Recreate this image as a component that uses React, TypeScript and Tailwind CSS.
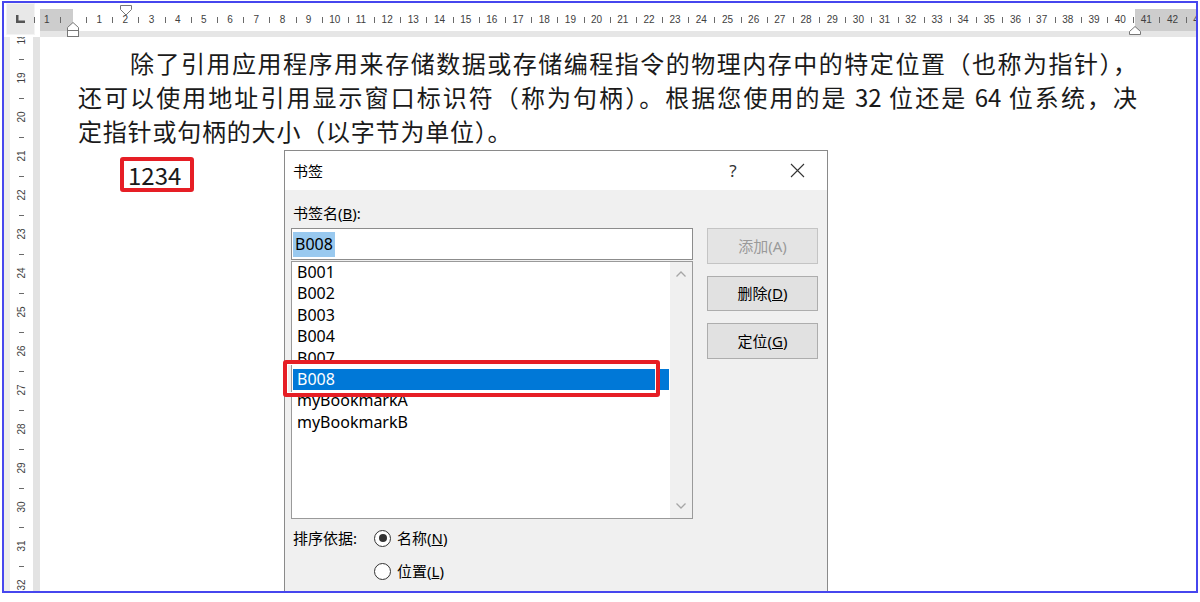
import React from 'react';

const H_UNIT = 26.18;
const H_ZERO = 33; // margin edge, px from the left of the ruler strip

const hLabels: { n: number; x: number }[] = [];
const hTicks: number[] = [];
for (let n = -1; n <= 43; n++) {
  if (n !== 0) hLabels.push({ n: Math.abs(n), x: H_ZERO + n * H_UNIT });
  hTicks.push(H_ZERO + (n - 0.5) * H_UNIT);
}

const vLabels: { n: number; y: number }[] = [];
const vTicks: number[] = [];
for (let k = -1; k <= 13; k++) {
  vLabels.push({ n: 19 + k, y: 41 + k * 39 });
  vTicks.push(21.5 + k * 39);
}

const items = ['B001', 'B002', 'B003', 'B004', 'B007', 'B008', 'myBookmarkA', 'myBookmarkB'];

function HRuler() {
  return (
    <div className="relative flex-1 h-[34px] bg-white">
      <div className="mt-[6px] h-[22px] flex">
        <div className="w-[33px] bg-[#cdcdcd]" />
        <div className="w-[1062px] bg-white" />
        <div className="flex-1 bg-[#cdcdcd]" />
      </div>
      <div className="h-[6px] bg-[#e6e6e6]" />
      {hTicks.map((x, i) => (
        <div key={'t' + i} className="absolute top-[14px] w-px h-[6px] bg-[#6a6a6a]" style={{ left: x }} />
      ))}
      {hLabels.map((l, i) => (
        <div
          key={'l' + i}
          className="absolute top-[10px] -translate-x-1/2 text-[10px] leading-[14px] text-[#404040] [font-family:'Liberation_Sans',sans-serif]"
          style={{ left: l.x }}
        >
          {l.n}
        </div>
      ))}
      {/* first line indent */}
      <svg className="absolute left-[80px] top-[2px]" width="12" height="11" viewBox="0 0 12 11">
        <path d="M0.5 0.5 H11.5 V4.5 L6 10 L0.5 4.5 Z" fill="white" stroke="#777" />
      </svg>
      {/* hanging indent */}
      <svg className="absolute left-[27px] top-[19px]" width="12" height="15" viewBox="0 0 12 15">
        <path d="M6 0.5 L11.5 5.5 V8.5 H0.5 V5.5 Z" fill="white" stroke="#777" />
        <rect x="0.5" y="8.5" width="11" height="6" fill="white" stroke="#777" />
      </svg>
      {/* right indent */}
      <svg className="absolute left-[1089px] top-[23px]" width="12" height="9" viewBox="0 0 12 9">
        <path d="M6 0.5 L11.5 5.5 V8.5 H0.5 V5.5 Z" fill="white" stroke="#777" />
      </svg>
    </div>
  );
}

function VRuler() {
  return (
    <div className="relative w-[36px] h-full flex overflow-hidden">
      <div className="w-[6px] bg-[#ececec]" />
      <div className="w-[23px] bg-white" />
      <div className="w-[7px] bg-[#e3e3e3]" />
      {vTicks.map((y, i) => (
        <div key={'t' + i} className="absolute left-[15px] w-[5px] h-px bg-[#6a6a6a]" style={{ top: y }} />
      ))}
      {vLabels.map((l, i) => (
        <div
          key={'l' + i}
          className="absolute left-[18px] -translate-x-1/2 -translate-y-1/2 -rotate-90 text-[10px] leading-[12px] text-[#404040] [font-family:'Liberation_Sans',sans-serif]"
          style={{ top: l.y }}
        >
          {l.n}
        </div>
      ))}
    </div>
  );
}

function Chevron({ up }: { up?: boolean }) {
  return (
    <svg width="10" height="6" viewBox="0 0 10 6">
      <polyline
        points={up ? '0.5,5.5 5,1 9.5,5.5' : '0.5,0.5 5,5 9.5,0.5'}
        fill="none"
        stroke="#a6a6a6"
        strokeWidth="1.3"
      />
    </svg>
  );
}

function Radio({ checked }: { checked?: boolean }) {
  return (
    <div className="w-[17px] h-[17px] rounded-full border border-[#333] bg-white flex items-center justify-center">
      {checked && <div className="w-[8px] h-[8px] rounded-full bg-[#333]" />}
    </div>
  );
}

function BookmarkDialog() {
  return (
    <div className="absolute left-[280px] top-[147px] w-[544px] h-[460px] border border-[#8a8a8a] bg-[#f0f0f0] text-black [font-family:'Noto_Sans','Noto_Sans_CJK_SC',sans-serif]">
      <div className="h-[39px] bg-white flex items-center pl-[8px]">
        <span className="text-[15px] leading-[20px]">书签</span>
        <div className="flex-1" />
        <div className="w-[40px] text-center text-[17px] text-[#333]">?</div>
        <div className="w-[40px] ml-[24px] mr-[10px] flex justify-center">
          <svg width="15" height="15" viewBox="0 0 15 15">
            <path d="M1 1 L14 14 M14 1 L1 14" stroke="#333" strokeWidth="1.1" />
          </svg>
        </div>
      </div>

      <div className="pl-[6px] pt-[13px]">
        <div className="ml-[2px] h-[20px] text-[15px] leading-[20px]">
          书签名(<span className="underline">B</span>):
        </div>

        <div className="mt-[5px] flex gap-[14px]">
          <div className="w-[402px]">
            <div className="h-[32px] border border-[#8c8c8c] bg-white flex items-center pl-[1px]">
              <span className="bg-[#99c9ef] px-[2px] h-[25px] text-[16px] leading-[25px]">B008</span>
            </div>
            <div className="mt-[1px] h-[258px] border border-[#9a9a9a] bg-white flex">
              <div className="flex-1 text-[16px]">
                {items.map((it) => (
                  <div
                    key={it}
                    className={
                      it === 'B008'
                        ? 'h-[21.4px] leading-[21.4px] ml-[1px] mr-[1px] pl-[4px] bg-[#0078d7] text-white'
                        : 'h-[21.4px] leading-[21.4px] pl-[5px]'
                    }
                  >
                    {it}
                  </div>
                ))}
              </div>
              <div className="w-[22px] bg-[#f0f0f0] flex flex-col items-center justify-between pt-[9px] pb-[9px]">
                <Chevron up />
                <Chevron />
              </div>
            </div>
          </div>

          <div className="w-[111px] flex flex-col gap-[12px] text-[15px]">
            <div className="h-[35.5px] border border-[#c4c4c4] bg-[#e4e4e4] flex items-center justify-center text-[#9a9a9a]">
              添加(A)
            </div>
            <div className="h-[35.5px] border border-[#adadad] bg-[#e1e1e1] flex items-center justify-center">
              删除(<span className="underline">D</span>)
            </div>
            <div className="h-[35.5px] border border-[#adadad] bg-[#e1e1e1] flex items-center justify-center">
              定位(<span className="underline">G</span>)
            </div>
          </div>
        </div>

        <div className="mt-[9px] flex text-[15px]">
          <div className="ml-[2px] w-[81px] h-[20px] leading-[20px]">排序依据:</div>
          <div className="flex flex-col gap-[13px]">
            <div className="h-[20px] flex items-center gap-[6px]">
              <Radio checked />
              <span className="leading-[20px]">
                名称(<span className="underline">N</span>)
              </span>
            </div>
            <div className="h-[20px] flex items-center gap-[6px]">
              <Radio />
              <span className="leading-[20px]">
                位置(<span className="underline">L</span>)
              </span>
            </div>
          </div>
        </div>
      </div>
    </div>
  );
}

export default function App() {
  return (
    <div className="w-[1200px] h-[602px] bg-white overflow-hidden">
      <div className="ml-[2px] mt-[1px] w-[1196px] h-[592px] border-2 border-[#4646ee] overflow-hidden relative bg-white">
        <div className="flex h-[34px]">
          <div className="w-[36px] h-[34px] pl-[2px]">
            <div className="w-[29px] h-[32px] bg-[#e8e8e8] border border-[#f4f4f4] flex items-center justify-center">
              <svg width="9" height="8" viewBox="0 0 9 8">
                <path d="M0 0 H2.5 V5.5 H9 V8 H0 Z" fill="#555" />
              </svg>
            </div>
          </div>
          <HRuler />
        </div>

        <div className="flex h-[554px]">
          <VRuler />
          <div className="flex-1 pt-[9px] text-[24px] text-[#1a1a1a] [font-family:'Noto_Sans_CJK_SC',sans-serif]">
            <div className="ml-[90px] mr-[59px] h-[34px] leading-[34px] text-justify [text-align-last:justify]">
              除了引用应用程序用来存储数据或存储编程指令的物理内存中的特定位置（也称为指针），
            </div>
            <div className="ml-[38px] mr-[59px] h-[34px] leading-[34px] text-justify [text-align-last:justify]">
              还可以使用地址引用显示窗口标识符（称为句柄）。根据您使用的是 32 位还是 64 位系统，决
            </div>
            <div className="ml-[38px] h-[34px] leading-[34px] tracking-[0.8px]">
              定指针或句柄的大小（以字节为单位）。
            </div>
            <div className="ml-[80px] mt-[9px] w-[74px] h-[35px] border-[4px] border-[#e61e25] rounded-[3px] pl-[4px] leading-[27px]">
              1234
            </div>
          </div>
        </div>

        <BookmarkDialog />

        {/* annotation around the selected bookmark */}
        <div className="absolute left-[279px] top-[357px] w-[377px] h-[37px] border-[4px] border-[#e61e25] rounded-[3px] shadow-[inset_0_0_0_1px_white]" />
      </div>
    </div>
  );
}
